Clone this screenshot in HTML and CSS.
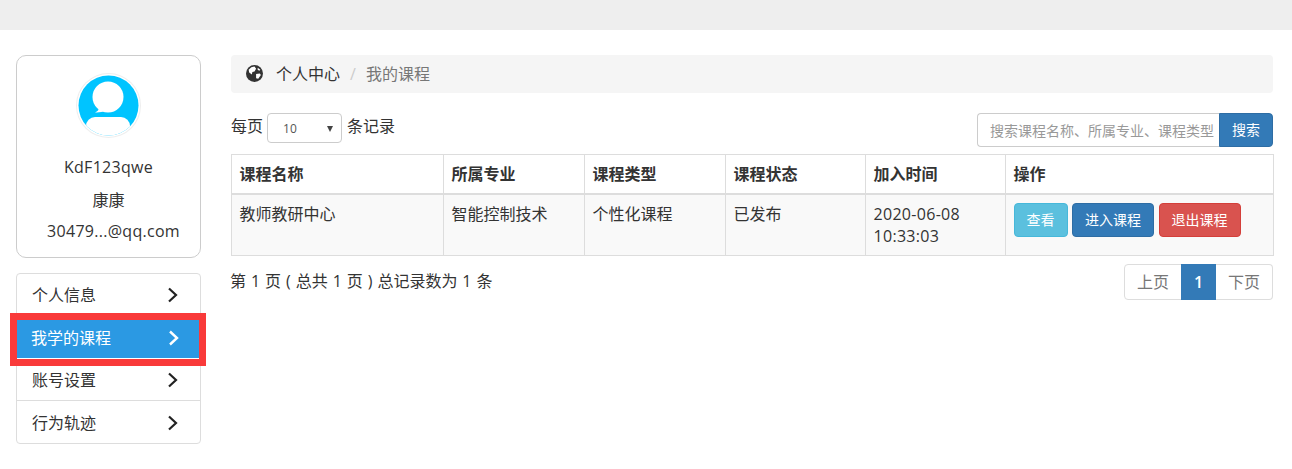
FILE: index.html
```html
<!DOCTYPE html>
<html lang="zh">
<head>
<meta charset="utf-8">
<title>我的课程</title>
<link rel="stylesheet" href="styles.css">
</head>
<body>
<div class="topbar"></div>
<div class="page">
  <aside class="side">
    <div class="profile">
      <div class="avatar">
        <svg viewBox="0 0 65 65" width="65" height="65">
          <defs><clipPath id="avclip"><circle cx="32.5" cy="32.5" r="30"/></clipPath></defs>
          <circle cx="32.5" cy="32.5" r="32.5" fill="#eee"/>
          <circle cx="32.5" cy="32.5" r="31.5" fill="#fff"/>
          <circle cx="32.5" cy="32.5" r="30" fill="#00c4ff"/>
          <circle cx="32" cy="24" r="15.5" fill="#fff"/>
          <path d="M23 34 Q23 38 19 39.500 Q25 40 30 37Z" fill="#fff"/>
          <g clip-path="url(#avclip)"><rect x="10" y="44" width="44" height="30" rx="9" fill="#fff"/></g>
        </svg>
      </div>
      <div class="uname">KdF123qwe</div>
      <div class="rname">康康</div>
      <div class="email">30479...@qq.com</div>
    </div>
    <ul class="menu">
      <li class="item"><span>个人信息</span><svg class="chev" viewBox="0 0 12 16" width="12" height="16"><path d="M2 1.500 9 8 2 14.500" fill="none" stroke="#222" stroke-width="2.200"/></svg></li>
      <li class="item active"><span>我学的课程</span><svg class="chev" viewBox="0 0 12 16" width="12" height="16"><path d="M2 1.500 9 8 2 14.500" fill="none" stroke="#fff" stroke-width="2.400"/></svg></li>
      <li class="item"><span>账号设置</span><svg class="chev" viewBox="0 0 12 16" width="12" height="16"><path d="M2 1.500 9 8 2 14.500" fill="none" stroke="#222" stroke-width="2.200"/></svg></li>
      <li class="item"><span>行为轨迹</span><svg class="chev" viewBox="0 0 12 16" width="12" height="16"><path d="M2 1.500 9 8 2 14.500" fill="none" stroke="#222" stroke-width="2.200"/></svg></li>
    </ul>
    <div class="redbox"></div>
  </aside>
  <main class="main">
    <div class="crumb">
      <svg class="globe" viewBox="0 0 16 16" width="17" height="17">
        <circle cx="8" cy="8" r="8" fill="#333"/>
        <path d="M5 2 8 1.500 9.500 3.500 8 6 6 6.500 5.500 9 3 7 2.500 4.500Z M9.500 8.500 13 8 14 9.500 11.500 13 9.500 12.500Z M11 2.500 13.500 4.500 12.500 5.500 11 4.500Z" fill="#fff"/>
      </svg>
      <span class="c1">个人中心</span><span class="sep">/</span><span class="c2">我的课程</span>
    </div>
    <div class="tools">
      <div class="len">每页<span class="sel"><span>10</span><i class="arr"></i></span>条记录</div>
      <div class="search"><span class="input">搜索课程名称、所属专业、课程类型</span><span class="sbtn">搜索</span></div>
    </div>
    <table class="tbl">
      <colgroup><col class="w1"><col class="w2"><col class="w4"><col class="w3"><col class="w3"><col></colgroup>
      <thead>
        <tr><th>课程名称</th><th>所属专业</th><th>课程类型</th><th>课程状态</th><th>加入时间</th><th>操作</th></tr>
      </thead>
      <tbody>
        <tr>
          <td>教师教研中心</td><td>智能控制技术</td><td>个性化课程</td><td>已发布</td><td class="date">2020-06-08 10:33:03</td>
          <td><div class="ops"><span class="btn info">查看</span><span class="btn primary">进入课程</span><span class="btn danger">退出课程</span></div></td>
        </tr>
      </tbody>
    </table>
    <div class="foot">
      <div class="count">第 1 页 ( 总共 1 页 ) 总记录数为 1 条</div>
      <div class="pager"><span class="pg first">上页</span><span class="pg cur">1</span><span class="pg last">下页</span></div>
    </div>
  </main>
</div>
</body>
</html>
```
FILE: styles.css
```css
* { box-sizing: border-box; }
html, body { margin: 0; padding: 0; background: #fff; }
body { height: 469px; overflow: hidden; font-family: "Open Sans", "Noto Sans CJK SC", sans-serif; font-size: 16px; color: #333; }
.topbar { height: 30px; background: #eee; }
.page { display: flex; padding: 25px 19px 0 16px; gap: 30px; }
.side { width: 185px; flex: none; position: relative; }
.main { flex: 1; min-width: 0; }
.profile { height: 203px; border: 1px solid #ccc; border-radius: 10px; display: flex; flex-direction: column; align-items: center; padding-top: 17px; }
.avatar { width: 65px; height: 65px; }
.avatar svg { display: block; }
.uname { margin-top: 17px; line-height: 24px; letter-spacing: 0.3px; }
.rname { margin-top: 9px; line-height: 24px; }
.email { margin-top: 7px; margin-left: 10px; line-height: 24px; letter-spacing: 0.28px; }
.menu { list-style: none; margin: 15px 0 0; padding: 0; border: 1px solid #ddd; border-radius: 4px; height: 171px; }
.item { height: 42.33px; display: flex; align-items: center; justify-content: space-between; padding: 0 21px 0 15px; border-bottom: 1px solid #ddd; line-height: 20px; }
.item + .item { padding-top: 2px; }
.item:last-child { border-bottom: 0; }
.item.active { background: #2b99e3; color: #fff; border-bottom: 1px solid #fff; margin: 0 1px 0 0; padding: 2px 19px 0 14px; }
.chev { display: block; }
.redbox { position: absolute; left: -6px; top: 258px; width: 196px; height: 53px; border: 7px solid #f93a3a; pointer-events: none; }
.crumb { height: 38px; background: #f5f5f5; border-radius: 4px; display: flex; align-items: center; padding-left: 15px; line-height: 22px; }
.globe { display: block; margin-right: 13px; margin-top: -2px; }
.sep { color: #ccc; margin: 0 10px; }
.c2 { color: #777; }
.tools { display: flex; justify-content: space-between; align-items: flex-start; margin-top: 20px; height: 41px; }
.len { display: flex; align-items: flex-start; line-height: 26px; }
.sel { width: 75px; height: 30px; border: 1px solid #ccc; border-radius: 4px; margin: 0 5px 0 4px; display: flex; align-items: center; justify-content: space-between; padding: 1px 8px 0 15px; font-size: 12px; color: #555; }
.arr { width: 0; height: 0; border-left: 3px solid transparent; border-right: 3px solid transparent; border-top: 6px solid #444; }
.search { display: flex; width: 296px; height: 34px; }
.input { flex: 1; min-width: 0; border: 1px solid #ccc; border-right: 0; border-radius: 4px 0 0 4px; font-size: 14px; line-height: 34px; padding-left: 12px; color: #999; white-space: nowrap; overflow: hidden; }
.sbtn { width: 54px; flex: none; background: #337ab7; border: 1px solid #2e6da4; border-radius: 0 4px 4px 0; color: #fff; font-size: 14px; text-align: center; line-height: 32px; }
.tbl { width: 1043px; border-collapse: collapse; table-layout: fixed; }
.w1 { width: 212px; }
.w2 { width: 141px; }
.w3 { width: 140px; }
.w4 { width: 141px; }
.tbl th, .tbl td { border: 1px solid #ddd; padding: 8px 8px 8px 7.5px; line-height: 22px; text-align: left; vertical-align: top; }
.tbl th { font-weight: 700; border-bottom: 2px solid #ddd; height: 39px; padding-bottom: 7px; }
.tbl tbody tr { background: #f9f9f9; }
.tbl td { height: 62px; }
.tbl .date { letter-spacing: 0.3px; }
.ops { display: flex; gap: 4.500px; }
.btn { display: block; height: 34px; line-height: 32px; padding: 0 12px; border: 1px solid transparent; border-radius: 4px; font-size: 14px; color: #fff; }
.info { background: #5bc0de; border-color: #46b8da; }
.primary { background: #337ab7; border-color: #2e6da4; }
.danger { background: #d9534f; border-color: #d43f3a; }
.foot { display: flex; justify-content: space-between; margin-top: 8px; }
.count { margin: 6px 0 0 -1px; line-height: 22px; word-spacing: 0.8px; }
.pager { display: flex; height: 36px; }
.pg { display: block; height: 36px; line-height: 34px; border: 1px solid #ddd; padding: 0 12px; color: #777; }
.first { border-radius: 4px 0 0 4px; }
.last { border-radius: 0 4px 4px 0; border-left: 0; }
.cur { background: #337ab7; border-color: #337ab7; color: #fff; font-weight: 600; width: 35px; margin-left: -1px; padding: 0; text-align: center; }
```
